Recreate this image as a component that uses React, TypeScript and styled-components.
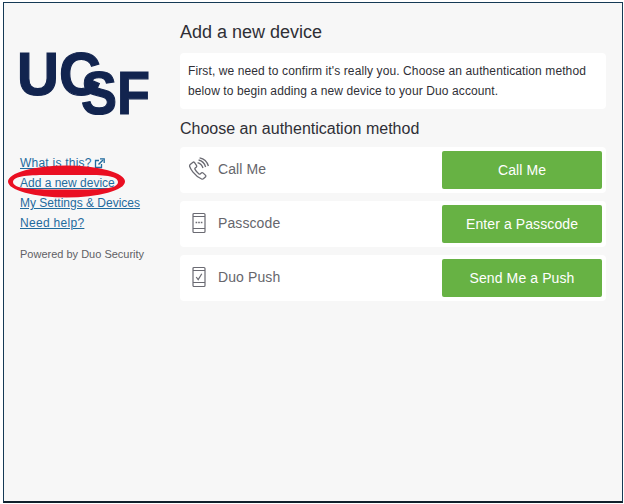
import React from "react";
import styled, { createGlobalStyle } from "styled-components";

type Method = {
  label: string;
  action: string;
  icon: React.ReactNode;
};

const PhoneIcon = () => (
  <svg width="22" height="24" viewBox="0 0 22 24" fill="none" stroke="#6a6a72" strokeWidth="1.3">
    <path d="M2.2 7.6 L5 5.2 Q5.8 4.7 6.4 5.5 L8.6 8.7 Q9 9.4 8.4 10 L7 11.2 Q6.6 11.7 7 12.4 Q8.6 15.2 11 17 Q11.7 17.4 12.2 17 L13.6 15.8 Q14.3 15.3 15 15.9 L17.6 18.4 Q18.2 19.1 17.6 19.8 L15.4 21.8 Q14.6 22.4 13.6 22 Q8.6 19.8 5 15.2 Q2.4 11.8 1.6 9.2 Q1.5 8.2 2.2 7.6 Z" />
    <path d="M9.6 5.6 Q13.6 6.6 15 11" />
    <path d="M10.6 3 Q16 4.2 17.6 10" />
    <path d="M11.6 0.8 Q18.4 2 20.4 9" />
  </svg>
);

const PasscodeIcon = () => (
  <svg width="14" height="22" viewBox="0 0 14 22" fill="none" stroke="#6a6a72" strokeWidth="1.2">
    <rect x="1" y="1.5" width="12" height="19" rx="1" />
    <path d="M1 4.5 H13 M1 16.5 H13" />
    <path d="M3.6 10.5 H5.2 M6.2 10.5 H7.8 M8.8 10.5 H10.4" strokeWidth="1.6" />
  </svg>
);

const PushIcon = () => (
  <svg width="14" height="22" viewBox="0 0 14 22" fill="none" stroke="#6a6a72" strokeWidth="1.2">
    <rect x="1" y="1.5" width="12" height="19" rx="1" />
    <path d="M1 4.5 H13 M1 16.5 H13" />
    <path d="M4.2 11 L6.2 13.6 L9.8 7.8" />
  </svg>
);

const ExternalIcon = () => (
  <svg width="11" height="11" viewBox="0 0 11 11" fill="none" stroke="#1f6b9e">
    <path d="M7.5 6 V9.5 H1.5 V2.5 H5" strokeWidth="1.3" />
    <path d="M4.5 6.5 L9 2" strokeWidth="1.5" />
    <path d="M6 0.8 H10.2 V5" strokeWidth="1.3" />
  </svg>
);

const methods: Method[] = [
  { label: "Call Me", action: "Call Me", icon: <PhoneIcon /> },
  { label: "Passcode", action: "Enter a Passcode", icon: <PasscodeIcon /> },
  { label: "Duo Push", action: "Send Me a Push", icon: <PushIcon /> },
];

const GlobalStyle = createGlobalStyle`
  html, body {
    margin: 0;
    padding: 0;
    background: #fff;
    font-family: "Liberation Sans", Arial, sans-serif;
  }
`;

const Page = styled.div`
  box-sizing: border-box;
  width: 624px;
  height: 504px;
  padding: 2px 1px 0 3px;
  background: #fff;
`;

const Frame = styled.div`
  position: relative;
  box-sizing: border-box;
  display: flex;
  width: 620px;
  height: 501px;
  border-top: 1px solid #153a55;
  border-left: 1px solid #153a55;
  border-right: 1px solid #153a55;
  border-bottom: 2px solid #10202c;
  background: #f7f7f7;
`;

const Sidebar = styled.nav`
  box-sizing: border-box;
  width: 176px;
  padding: 46px 0 0 16px;
  display: flex;
  flex-direction: column;
  align-items: flex-start;
`;

const Logo = styled.svg`
  display: block;
  margin-bottom: 38px;
  overflow: visible;
`;

const LogoText = styled.text`
  font-family: "Liberation Sans", Arial, sans-serif;
  font-weight: 700;
  font-size: 61px;
  fill: #12244f;
  stroke: #12244f;
  stroke-width: 1.2px;
`;

const SideLink = styled.a<{ $spacing?: number }>`
  display: flex;
  align-items: center;
  gap: 2px;
  height: 20px;
  font-size: 12px;
  letter-spacing: ${(p) => p.$spacing ?? 0}px;
  color: #1f6b9e;
  text-decoration: underline;
`;

const Powered = styled.p`
  margin: 14px 0 0;
  font-size: 11px;
  line-height: 14px;
  color: #5f5f65;
`;

const Main = styled.main`
  box-sizing: border-box;
  width: 426px;
  padding-top: 18px;
`;

const Title = styled.h1`
  margin: 0 0 10px;
  font-size: 18px;
  line-height: 22px;
  font-weight: 400;
  color: #2f2f36;
`;

const Intro = styled.p`
  box-sizing: border-box;
  margin: 0;
  height: 56px;
  padding: 8px;
  font-size: 12px;
  line-height: 20px;
  letter-spacing: 0.11px;
  color: #2f2f36;
  background: #fff;
  border-radius: 4px;
`;

const Subtitle = styled.h2`
  margin: 10px 0 8px;
  font-size: 16px;
  line-height: 20px;
  font-weight: 400;
  color: #2f2f36;
`;

const Rows = styled.div`
  display: flex;
  flex-direction: column;
  gap: 8px;
`;

const Row = styled.div`
  box-sizing: border-box;
  height: 46px;
  padding: 4px;
  display: flex;
  align-items: center;
  background: #fff;
  border-radius: 4px;
`;

const IconSlot = styled.span`
  flex: none;
  width: 30px;
  display: flex;
  justify-content: center;
  margin-right: 4px;
  padding-bottom: 2px;
`;

const RowLabel = styled.span`
  flex: 1;
  font-size: 14px;
  letter-spacing: 0.1px;
  padding-bottom: 2px;
  color: #66666c;
`;

const GreenButton = styled.button`
  flex: none;
  width: 160px;
  height: 38px;
  border: 0;
  padding: 0;
  border-radius: 2px;
  background: #67b244;
  color: #fff;
  font-family: inherit;
  font-size: 14px;
  letter-spacing: 0.1px;
`;

const Scribble = styled.svg`
  position: absolute;
  left: 4px;
  top: 160px;
  pointer-events: none;
`;

export default function App() {
  return (
    <Page>
      <GlobalStyle />
      <Frame>
        <Sidebar>
          <Logo width="132" height="66" viewBox="0 0 132 66">
            <LogoText x="-3" y="46" textLength="84" lengthAdjust="spacingAndGlyphs">UC</LogoText>
            <LogoText x="61" y="65" textLength="69" lengthAdjust="spacingAndGlyphs">SF</LogoText>
          </Logo>
          <SideLink href="#" $spacing={0.23}>
            What is this? <ExternalIcon />
          </SideLink>
          <SideLink href="#">Add a new device</SideLink>
          <SideLink href="#">My Settings &amp; Devices</SideLink>
          <SideLink href="#" $spacing={0.3}>Need help?</SideLink>
          <Powered>Powered by Duo Security</Powered>
        </Sidebar>
        <Main>
          <Title>Add a new device</Title>
          <Intro>
            First, we need to confirm it's really you. Choose an authentication method
            below to begin adding a new device to your Duo account.
          </Intro>
          <Subtitle>Choose an authentication method</Subtitle>
          <Rows>
            {methods.map((m) => (
              <Row key={m.label}>
                <IconSlot>{m.icon}</IconSlot>
                <RowLabel>{m.label}</RowLabel>
                <GreenButton>{m.action}</GreenButton>
              </Row>
            ))}
          </Rows>
        </Main>
        <Scribble width="118" height="36" viewBox="0 0 118 36">
          <path
            fillRule="evenodd"
            fill="#ea0f22"
            d="M0 18.5 A58.5 16 0 1 0 117 18.5 A58.5 16 0 1 0 0 18.5 Z M5 19 C5 11 32 12 58 12 C87 12 110 11 110 19 C110 27 87 26.5 58 26.5 C32 26.5 5 27 5 19 Z"
          />
        </Scribble>
      </Frame>
    </Page>
  );
}
